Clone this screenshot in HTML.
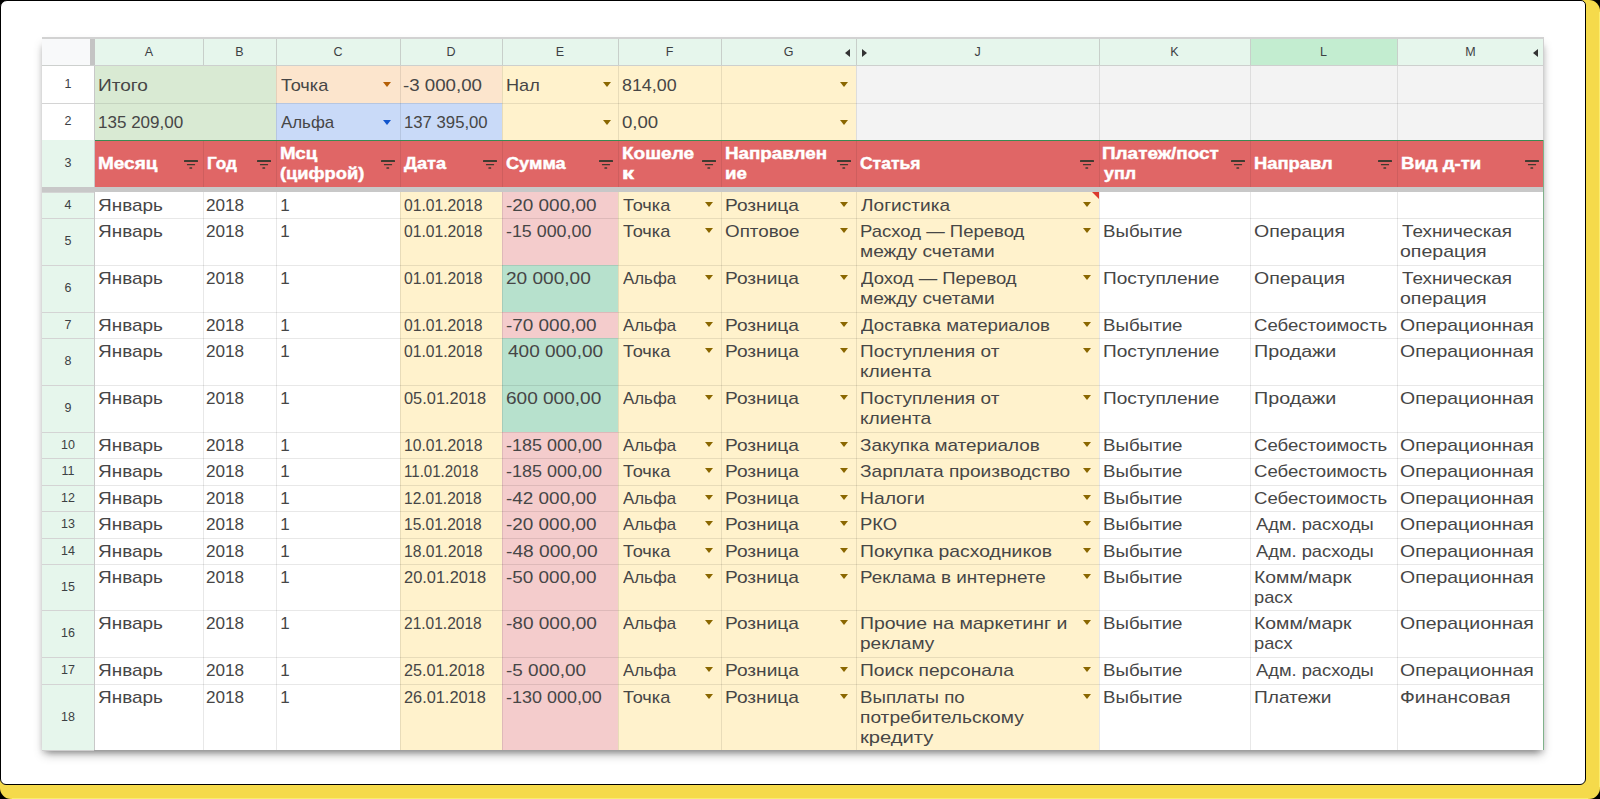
<!DOCTYPE html><html><head><meta charset="utf-8"><title>Sheet</title><style>

*{box-sizing:border-box}
html,body{margin:0;padding:0}
body{width:1600px;height:799px;background:#000;position:relative;overflow:hidden;font-family:"Liberation Sans",sans-serif}
.yl{position:absolute;left:0;top:0;width:1600px;height:799px;background:#f5da4b;border-radius:11px}
.card{position:absolute;left:0;top:0;width:1586px;height:785px;background:#fff;border:1.8px solid #000;border-radius:7px 5px 6px 6px}
.tbl{position:absolute;left:42px;top:37px;width:1502px;height:713px;background:#fff;box-shadow:0 6px 10px -2px rgba(0,0,0,0.30),-3px 6px 5px -3px rgba(0,0,0,0.12),3px 6px 5px -3px rgba(0,0,0,0.12)}
.b{position:absolute}
.t,.h{position:absolute;transform-origin:0 0;white-space:nowrap;font-size:17px;line-height:20px;color:#464646}
.h{color:#fff;font-weight:bold;-webkit-text-stroke:0.45px #fff}
.ch{position:absolute;height:26px;line-height:26px;text-align:center;font-size:12.5px;color:#3c4043}
.rn{position:absolute;text-align:center;font-size:12.5px;color:#3c4043}
.ar{position:absolute;width:0;height:0;border-left:4.5px solid transparent;border-right:4.5px solid transparent;border-top:5px solid #7f6000}
.fi{position:absolute;fill:#3f3a30}
.tl{position:absolute;width:0;height:0;border-top:4.5px solid transparent;border-bottom:4.5px solid transparent;border-right:5.5px solid #333}
.trr{position:absolute;width:0;height:0;border-top:4.5px solid transparent;border-bottom:4.5px solid transparent;border-left:5.5px solid #333}
.cm{position:absolute;width:0;height:0;border-left:7px solid transparent;border-top:7px solid #db3a2d}

</style></head><body>
<div class="yl"></div><div class="b" style="left:12px;top:798px;width:1576px;height:1px;background:#fbec6e"></div><div class="b" style="left:1599px;top:12px;width:1px;height:775px;background:#fbec6e"></div><div class="card"></div><div class="tbl"></div>
<div class="b" style="left:42px;top:39px;width:48px;height:26px;background:#f8f9fa;"></div>
<div class="b" style="left:90px;top:39px;width:5px;height:26px;background:#c4c4c4;"></div>
<div class="b" style="left:95px;top:39px;width:1449px;height:26px;background:#e6f6ec;"></div>
<div class="b" style="left:1250px;top:39px;width:147px;height:26px;background:#c3edd0;"></div>
<div class="b" style="left:42px;top:66px;width:52px;height:74px;background:#ffffff;"></div>
<div class="b" style="left:42px;top:140px;width:52px;height:610px;background:#e6f6ec;"></div>
<div class="b" style="left:95px;top:66px;width:181px;height:74px;background:#d9ead3;"></div>
<div class="b" style="left:276px;top:66px;width:226px;height:37px;background:#fce5cd;"></div>
<div class="b" style="left:276px;top:103px;width:226px;height:37px;background:#c9daf8;"></div>
<div class="b" style="left:502px;top:66px;width:354px;height:74px;background:#fff2cc;"></div>
<div class="b" style="left:856px;top:66px;width:688px;height:74px;background:#f3f3f3;"></div>
<div class="b" style="left:95px;top:140px;width:1449px;height:47px;background:#e06666;"></div>
<div class="b" style="left:42px;top:187px;width:1502px;height:5px;background:#c8c8c8;"></div>
<div class="b" style="left:95px;top:192px;width:1449px;height:558px;background:#ffffff;"></div>
<div class="b" style="left:400px;top:192px;width:102px;height:26px;background:#fff2cc;"></div>
<div class="b" style="left:502px;top:192px;width:116px;height:26px;background:#f4cccc;"></div>
<div class="b" style="left:618px;top:192px;width:481px;height:26px;background:#fff2cc;"></div>
<div class="b" style="left:400px;top:218px;width:102px;height:47px;background:#fff2cc;"></div>
<div class="b" style="left:502px;top:218px;width:116px;height:47px;background:#f4cccc;"></div>
<div class="b" style="left:618px;top:218px;width:481px;height:47px;background:#fff2cc;"></div>
<div class="b" style="left:400px;top:265px;width:102px;height:47px;background:#fff2cc;"></div>
<div class="b" style="left:502px;top:265px;width:116px;height:47px;background:#b7e1cd;"></div>
<div class="b" style="left:618px;top:265px;width:481px;height:47px;background:#fff2cc;"></div>
<div class="b" style="left:400px;top:312px;width:102px;height:26px;background:#fff2cc;"></div>
<div class="b" style="left:502px;top:312px;width:116px;height:26px;background:#f4cccc;"></div>
<div class="b" style="left:618px;top:312px;width:481px;height:26px;background:#fff2cc;"></div>
<div class="b" style="left:400px;top:338px;width:102px;height:47px;background:#fff2cc;"></div>
<div class="b" style="left:502px;top:338px;width:116px;height:47px;background:#b7e1cd;"></div>
<div class="b" style="left:618px;top:338px;width:481px;height:47px;background:#fff2cc;"></div>
<div class="b" style="left:400px;top:385px;width:102px;height:47px;background:#fff2cc;"></div>
<div class="b" style="left:502px;top:385px;width:116px;height:47px;background:#b7e1cd;"></div>
<div class="b" style="left:618px;top:385px;width:481px;height:47px;background:#fff2cc;"></div>
<div class="b" style="left:400px;top:432px;width:102px;height:26px;background:#fff2cc;"></div>
<div class="b" style="left:502px;top:432px;width:116px;height:26px;background:#f4cccc;"></div>
<div class="b" style="left:618px;top:432px;width:481px;height:26px;background:#fff2cc;"></div>
<div class="b" style="left:400px;top:458px;width:102px;height:27px;background:#fff2cc;"></div>
<div class="b" style="left:502px;top:458px;width:116px;height:27px;background:#f4cccc;"></div>
<div class="b" style="left:618px;top:458px;width:481px;height:27px;background:#fff2cc;"></div>
<div class="b" style="left:400px;top:485px;width:102px;height:26px;background:#fff2cc;"></div>
<div class="b" style="left:502px;top:485px;width:116px;height:26px;background:#f4cccc;"></div>
<div class="b" style="left:618px;top:485px;width:481px;height:26px;background:#fff2cc;"></div>
<div class="b" style="left:400px;top:511px;width:102px;height:27px;background:#fff2cc;"></div>
<div class="b" style="left:502px;top:511px;width:116px;height:27px;background:#f4cccc;"></div>
<div class="b" style="left:618px;top:511px;width:481px;height:27px;background:#fff2cc;"></div>
<div class="b" style="left:400px;top:538px;width:102px;height:26px;background:#fff2cc;"></div>
<div class="b" style="left:502px;top:538px;width:116px;height:26px;background:#f4cccc;"></div>
<div class="b" style="left:618px;top:538px;width:481px;height:26px;background:#fff2cc;"></div>
<div class="b" style="left:400px;top:564px;width:102px;height:46px;background:#fff2cc;"></div>
<div class="b" style="left:502px;top:564px;width:116px;height:46px;background:#f4cccc;"></div>
<div class="b" style="left:618px;top:564px;width:481px;height:46px;background:#fff2cc;"></div>
<div class="b" style="left:400px;top:610px;width:102px;height:47px;background:#fff2cc;"></div>
<div class="b" style="left:502px;top:610px;width:116px;height:47px;background:#f4cccc;"></div>
<div class="b" style="left:618px;top:610px;width:481px;height:47px;background:#fff2cc;"></div>
<div class="b" style="left:400px;top:657px;width:102px;height:27px;background:#fff2cc;"></div>
<div class="b" style="left:502px;top:657px;width:116px;height:27px;background:#f4cccc;"></div>
<div class="b" style="left:618px;top:657px;width:481px;height:27px;background:#fff2cc;"></div>
<div class="b" style="left:400px;top:684px;width:102px;height:66px;background:#fff2cc;"></div>
<div class="b" style="left:502px;top:684px;width:116px;height:66px;background:#f4cccc;"></div>
<div class="b" style="left:618px;top:684px;width:481px;height:66px;background:#fff2cc;"></div>
<div class="b" style="left:42px;top:37px;width:1502px;height:2px;background:#d2d2d2"></div>
<div class="b" style="left:42px;top:65px;width:1502px;height:1px;background:#cdd0ce"></div>
<div class="b" style="left:1543px;top:39px;width:1px;height:27px;background:#d0d0d0"></div>
<div class="b" style="left:203px;top:39px;width:1px;height:26px;background:#c8cfca"></div>
<div class="b" style="left:276px;top:39px;width:1px;height:26px;background:#c8cfca"></div>
<div class="b" style="left:400px;top:39px;width:1px;height:26px;background:#c8cfca"></div>
<div class="b" style="left:502px;top:39px;width:1px;height:26px;background:#c8cfca"></div>
<div class="b" style="left:618px;top:39px;width:1px;height:26px;background:#c8cfca"></div>
<div class="b" style="left:721px;top:39px;width:1px;height:26px;background:#c8cfca"></div>
<div class="b" style="left:856px;top:39px;width:1px;height:26px;background:#c8cfca"></div>
<div class="b" style="left:1099px;top:39px;width:1px;height:26px;background:#c8cfca"></div>
<div class="b" style="left:1250px;top:39px;width:1px;height:26px;background:#c8cfca"></div>
<div class="b" style="left:1397px;top:39px;width:1px;height:26px;background:#c8cfca"></div>
<div class="b" style="left:94px;top:66px;width:1px;height:684px;background:#c8c8c8"></div>
<div class="b" style="left:42px;top:103px;width:52px;height:1px;background:#d4d4d4"></div>
<div class="b" style="left:42px;top:192px;width:52px;height:1px;background:#d4d4d4"></div>
<div class="b" style="left:42px;top:218px;width:52px;height:1px;background:#d4d4d4"></div>
<div class="b" style="left:42px;top:265px;width:52px;height:1px;background:#d4d4d4"></div>
<div class="b" style="left:42px;top:312px;width:52px;height:1px;background:#d4d4d4"></div>
<div class="b" style="left:42px;top:338px;width:52px;height:1px;background:#d4d4d4"></div>
<div class="b" style="left:42px;top:385px;width:52px;height:1px;background:#d4d4d4"></div>
<div class="b" style="left:42px;top:432px;width:52px;height:1px;background:#d4d4d4"></div>
<div class="b" style="left:42px;top:458px;width:52px;height:1px;background:#d4d4d4"></div>
<div class="b" style="left:42px;top:485px;width:52px;height:1px;background:#d4d4d4"></div>
<div class="b" style="left:42px;top:511px;width:52px;height:1px;background:#d4d4d4"></div>
<div class="b" style="left:42px;top:538px;width:52px;height:1px;background:#d4d4d4"></div>
<div class="b" style="left:42px;top:564px;width:52px;height:1px;background:#d4d4d4"></div>
<div class="b" style="left:42px;top:610px;width:52px;height:1px;background:#d4d4d4"></div>
<div class="b" style="left:42px;top:657px;width:52px;height:1px;background:#d4d4d4"></div>
<div class="b" style="left:42px;top:684px;width:52px;height:1px;background:#d4d4d4"></div>
<div class="b" style="left:42px;top:750px;width:52px;height:1px;background:#cfcfcf"></div>
<div class="b" style="left:276px;top:66px;width:1px;height:74px;background:rgba(0,0,0,0.09)"></div>
<div class="b" style="left:400px;top:66px;width:1px;height:74px;background:rgba(0,0,0,0.09)"></div>
<div class="b" style="left:502px;top:66px;width:1px;height:74px;background:rgba(0,0,0,0.09)"></div>
<div class="b" style="left:618px;top:66px;width:1px;height:74px;background:rgba(0,0,0,0.09)"></div>
<div class="b" style="left:721px;top:66px;width:1px;height:74px;background:rgba(0,0,0,0.09)"></div>
<div class="b" style="left:856px;top:66px;width:1px;height:74px;background:rgba(0,0,0,0.09)"></div>
<div class="b" style="left:1099px;top:66px;width:1px;height:74px;background:rgba(0,0,0,0.09)"></div>
<div class="b" style="left:1250px;top:66px;width:1px;height:74px;background:rgba(0,0,0,0.09)"></div>
<div class="b" style="left:1397px;top:66px;width:1px;height:74px;background:rgba(0,0,0,0.09)"></div>
<div class="b" style="left:95px;top:103px;width:1449px;height:1px;background:rgba(0,0,0,0.09)"></div>
<div class="b" style="left:1543px;top:66px;width:1px;height:74px;background:#d0d0d0"></div>
<div class="b" style="left:203px;top:141px;width:1px;height:46px;background:rgba(0,0,0,0.08)"></div>
<div class="b" style="left:276px;top:141px;width:1px;height:46px;background:rgba(0,0,0,0.08)"></div>
<div class="b" style="left:400px;top:141px;width:1px;height:46px;background:rgba(0,0,0,0.08)"></div>
<div class="b" style="left:502px;top:141px;width:1px;height:46px;background:rgba(0,0,0,0.08)"></div>
<div class="b" style="left:618px;top:141px;width:1px;height:46px;background:rgba(0,0,0,0.08)"></div>
<div class="b" style="left:721px;top:141px;width:1px;height:46px;background:rgba(0,0,0,0.08)"></div>
<div class="b" style="left:856px;top:141px;width:1px;height:46px;background:rgba(0,0,0,0.08)"></div>
<div class="b" style="left:1099px;top:141px;width:1px;height:46px;background:rgba(0,0,0,0.08)"></div>
<div class="b" style="left:1250px;top:141px;width:1px;height:46px;background:rgba(0,0,0,0.08)"></div>
<div class="b" style="left:1397px;top:141px;width:1px;height:46px;background:rgba(0,0,0,0.08)"></div>
<div class="b" style="left:95px;top:140px;width:1449px;height:1px;background:#3a8a52"></div>
<div class="b" style="left:95px;top:218px;width:1449px;height:1px;background:rgba(0,0,0,0.09)"></div>
<div class="b" style="left:95px;top:265px;width:1449px;height:1px;background:rgba(0,0,0,0.09)"></div>
<div class="b" style="left:95px;top:312px;width:1449px;height:1px;background:rgba(0,0,0,0.09)"></div>
<div class="b" style="left:95px;top:338px;width:1449px;height:1px;background:rgba(0,0,0,0.09)"></div>
<div class="b" style="left:95px;top:385px;width:1449px;height:1px;background:rgba(0,0,0,0.09)"></div>
<div class="b" style="left:95px;top:432px;width:1449px;height:1px;background:rgba(0,0,0,0.09)"></div>
<div class="b" style="left:95px;top:458px;width:1449px;height:1px;background:rgba(0,0,0,0.09)"></div>
<div class="b" style="left:95px;top:485px;width:1449px;height:1px;background:rgba(0,0,0,0.09)"></div>
<div class="b" style="left:95px;top:511px;width:1449px;height:1px;background:rgba(0,0,0,0.09)"></div>
<div class="b" style="left:95px;top:538px;width:1449px;height:1px;background:rgba(0,0,0,0.09)"></div>
<div class="b" style="left:95px;top:564px;width:1449px;height:1px;background:rgba(0,0,0,0.09)"></div>
<div class="b" style="left:95px;top:610px;width:1449px;height:1px;background:rgba(0,0,0,0.09)"></div>
<div class="b" style="left:95px;top:657px;width:1449px;height:1px;background:rgba(0,0,0,0.09)"></div>
<div class="b" style="left:95px;top:684px;width:1449px;height:1px;background:rgba(0,0,0,0.09)"></div>
<div class="b" style="left:203px;top:192px;width:1px;height:558px;background:rgba(0,0,0,0.09)"></div>
<div class="b" style="left:276px;top:192px;width:1px;height:558px;background:rgba(0,0,0,0.09)"></div>
<div class="b" style="left:400px;top:192px;width:1px;height:558px;background:rgba(0,0,0,0.09)"></div>
<div class="b" style="left:502px;top:192px;width:1px;height:558px;background:rgba(0,0,0,0.09)"></div>
<div class="b" style="left:618px;top:192px;width:1px;height:558px;background:rgba(0,0,0,0.09)"></div>
<div class="b" style="left:721px;top:192px;width:1px;height:558px;background:rgba(0,0,0,0.09)"></div>
<div class="b" style="left:856px;top:192px;width:1px;height:558px;background:rgba(0,0,0,0.09)"></div>
<div class="b" style="left:1099px;top:192px;width:1px;height:558px;background:rgba(0,0,0,0.09)"></div>
<div class="b" style="left:1250px;top:192px;width:1px;height:558px;background:rgba(0,0,0,0.09)"></div>
<div class="b" style="left:1397px;top:192px;width:1px;height:558px;background:rgba(0,0,0,0.09)"></div>
<div class="b" style="left:1543px;top:140px;width:1px;height:610px;background:#7fb28a"></div>
<div class="ch" style="left:95px;top:39px;width:108px">A</div>
<div class="ch" style="left:203px;top:39px;width:73px">B</div>
<div class="ch" style="left:276px;top:39px;width:124px">C</div>
<div class="ch" style="left:400px;top:39px;width:102px">D</div>
<div class="ch" style="left:502px;top:39px;width:116px">E</div>
<div class="ch" style="left:618px;top:39px;width:103px">F</div>
<div class="ch" style="left:721px;top:39px;width:135px">G</div>
<div class="ch" style="left:856px;top:39px;width:243px">J</div>
<div class="ch" style="left:1099px;top:39px;width:151px">K</div>
<div class="ch" style="left:1250px;top:39px;width:147px">L</div>
<div class="ch" style="left:1397px;top:39px;width:147px">M</div>
<div class="tl" style="left:845px;top:48.5px"></div>
<div class="trr" style="left:862px;top:48.5px"></div>
<div class="tl" style="left:1533px;top:48.5px"></div>
<div class="rn" style="left:42px;top:66px;width:52px;height:37px;line-height:37px">1</div>
<div class="rn" style="left:42px;top:103px;width:52px;height:37px;line-height:37px">2</div>
<div class="rn" style="left:42px;top:140px;width:52px;height:47px;line-height:47px">3</div>
<div class="rn" style="left:42px;top:192px;width:52px;height:26px;line-height:26px">4</div>
<div class="rn" style="left:42px;top:218px;width:52px;height:47px;line-height:47px">5</div>
<div class="rn" style="left:42px;top:265px;width:52px;height:47px;line-height:47px">6</div>
<div class="rn" style="left:42px;top:312px;width:52px;height:26px;line-height:26px">7</div>
<div class="rn" style="left:42px;top:338px;width:52px;height:47px;line-height:47px">8</div>
<div class="rn" style="left:42px;top:385px;width:52px;height:47px;line-height:47px">9</div>
<div class="rn" style="left:42px;top:432px;width:52px;height:26px;line-height:26px">10</div>
<div class="rn" style="left:42px;top:458px;width:52px;height:27px;line-height:27px">11</div>
<div class="rn" style="left:42px;top:485px;width:52px;height:26px;line-height:26px">12</div>
<div class="rn" style="left:42px;top:511px;width:52px;height:27px;line-height:27px">13</div>
<div class="rn" style="left:42px;top:538px;width:52px;height:26px;line-height:26px">14</div>
<div class="rn" style="left:42px;top:564px;width:52px;height:46px;line-height:46px">15</div>
<div class="rn" style="left:42px;top:610px;width:52px;height:47px;line-height:47px">16</div>
<div class="rn" style="left:42px;top:657px;width:52px;height:27px;line-height:27px">17</div>
<div class="rn" style="left:42px;top:684px;width:52px;height:66px;line-height:66px">18</div>
<div class="ar" style="left:383px;top:82px;border-top-color:#b45f06"></div>
<div class="ar" style="left:383px;top:120px;border-top-color:#1155cc"></div>
<div class="ar" style="left:602.5px;top:82px;border-top-color:#8a6700"></div>
<div class="ar" style="left:602.5px;top:120px;border-top-color:#8a6700"></div>
<div class="ar" style="left:840px;top:82px;border-top-color:#8a6700"></div>
<div class="ar" style="left:840px;top:120px;border-top-color:#8a6700"></div>
<svg class="fi" style="left:184px;top:160px" width="14" height="9" viewBox="0 0 14 9"><rect x="0" y="0.1" width="14" height="1.8" rx="0.5"/><rect x="2.9" y="3.9" width="8.2" height="1.4" rx="0.5"/><rect x="5.4" y="7.2" width="2.8" height="1.5" rx="0.5"/></svg>
<svg class="fi" style="left:257px;top:160px" width="14" height="9" viewBox="0 0 14 9"><rect x="0" y="0.1" width="14" height="1.8" rx="0.5"/><rect x="2.9" y="3.9" width="8.2" height="1.4" rx="0.5"/><rect x="5.4" y="7.2" width="2.8" height="1.5" rx="0.5"/></svg>
<svg class="fi" style="left:381px;top:160px" width="14" height="9" viewBox="0 0 14 9"><rect x="0" y="0.1" width="14" height="1.8" rx="0.5"/><rect x="2.9" y="3.9" width="8.2" height="1.4" rx="0.5"/><rect x="5.4" y="7.2" width="2.8" height="1.5" rx="0.5"/></svg>
<svg class="fi" style="left:483px;top:160px" width="14" height="9" viewBox="0 0 14 9"><rect x="0" y="0.1" width="14" height="1.8" rx="0.5"/><rect x="2.9" y="3.9" width="8.2" height="1.4" rx="0.5"/><rect x="5.4" y="7.2" width="2.8" height="1.5" rx="0.5"/></svg>
<svg class="fi" style="left:599px;top:160px" width="14" height="9" viewBox="0 0 14 9"><rect x="0" y="0.1" width="14" height="1.8" rx="0.5"/><rect x="2.9" y="3.9" width="8.2" height="1.4" rx="0.5"/><rect x="5.4" y="7.2" width="2.8" height="1.5" rx="0.5"/></svg>
<svg class="fi" style="left:702px;top:160px" width="14" height="9" viewBox="0 0 14 9"><rect x="0" y="0.1" width="14" height="1.8" rx="0.5"/><rect x="2.9" y="3.9" width="8.2" height="1.4" rx="0.5"/><rect x="5.4" y="7.2" width="2.8" height="1.5" rx="0.5"/></svg>
<svg class="fi" style="left:837px;top:160px" width="14" height="9" viewBox="0 0 14 9"><rect x="0" y="0.1" width="14" height="1.8" rx="0.5"/><rect x="2.9" y="3.9" width="8.2" height="1.4" rx="0.5"/><rect x="5.4" y="7.2" width="2.8" height="1.5" rx="0.5"/></svg>
<svg class="fi" style="left:1080px;top:160px" width="14" height="9" viewBox="0 0 14 9"><rect x="0" y="0.1" width="14" height="1.8" rx="0.5"/><rect x="2.9" y="3.9" width="8.2" height="1.4" rx="0.5"/><rect x="5.4" y="7.2" width="2.8" height="1.5" rx="0.5"/></svg>
<svg class="fi" style="left:1231px;top:160px" width="14" height="9" viewBox="0 0 14 9"><rect x="0" y="0.1" width="14" height="1.8" rx="0.5"/><rect x="2.9" y="3.9" width="8.2" height="1.4" rx="0.5"/><rect x="5.4" y="7.2" width="2.8" height="1.5" rx="0.5"/></svg>
<svg class="fi" style="left:1378px;top:160px" width="14" height="9" viewBox="0 0 14 9"><rect x="0" y="0.1" width="14" height="1.8" rx="0.5"/><rect x="2.9" y="3.9" width="8.2" height="1.4" rx="0.5"/><rect x="5.4" y="7.2" width="2.8" height="1.5" rx="0.5"/></svg>
<svg class="fi" style="left:1525px;top:160px" width="14" height="9" viewBox="0 0 14 9"><rect x="0" y="0.1" width="14" height="1.8" rx="0.5"/><rect x="2.9" y="3.9" width="8.2" height="1.4" rx="0.5"/><rect x="5.4" y="7.2" width="2.8" height="1.5" rx="0.5"/></svg>
<div class="ar" style="left:705px;top:202px;border-top-color:#8a6700"></div>
<div class="ar" style="left:840px;top:202px;border-top-color:#8a6700"></div>
<div class="ar" style="left:1083px;top:202px;border-top-color:#8a6700"></div>
<div class="ar" style="left:705px;top:228px;border-top-color:#8a6700"></div>
<div class="ar" style="left:840px;top:228px;border-top-color:#8a6700"></div>
<div class="ar" style="left:1083px;top:228px;border-top-color:#8a6700"></div>
<div class="ar" style="left:705px;top:275px;border-top-color:#8a6700"></div>
<div class="ar" style="left:840px;top:275px;border-top-color:#8a6700"></div>
<div class="ar" style="left:1083px;top:275px;border-top-color:#8a6700"></div>
<div class="ar" style="left:705px;top:322px;border-top-color:#8a6700"></div>
<div class="ar" style="left:840px;top:322px;border-top-color:#8a6700"></div>
<div class="ar" style="left:1083px;top:322px;border-top-color:#8a6700"></div>
<div class="ar" style="left:705px;top:348px;border-top-color:#8a6700"></div>
<div class="ar" style="left:840px;top:348px;border-top-color:#8a6700"></div>
<div class="ar" style="left:1083px;top:348px;border-top-color:#8a6700"></div>
<div class="ar" style="left:705px;top:395px;border-top-color:#8a6700"></div>
<div class="ar" style="left:840px;top:395px;border-top-color:#8a6700"></div>
<div class="ar" style="left:1083px;top:395px;border-top-color:#8a6700"></div>
<div class="ar" style="left:705px;top:442px;border-top-color:#8a6700"></div>
<div class="ar" style="left:840px;top:442px;border-top-color:#8a6700"></div>
<div class="ar" style="left:1083px;top:442px;border-top-color:#8a6700"></div>
<div class="ar" style="left:705px;top:468px;border-top-color:#8a6700"></div>
<div class="ar" style="left:840px;top:468px;border-top-color:#8a6700"></div>
<div class="ar" style="left:1083px;top:468px;border-top-color:#8a6700"></div>
<div class="ar" style="left:705px;top:495px;border-top-color:#8a6700"></div>
<div class="ar" style="left:840px;top:495px;border-top-color:#8a6700"></div>
<div class="ar" style="left:1083px;top:495px;border-top-color:#8a6700"></div>
<div class="ar" style="left:705px;top:521px;border-top-color:#8a6700"></div>
<div class="ar" style="left:840px;top:521px;border-top-color:#8a6700"></div>
<div class="ar" style="left:1083px;top:521px;border-top-color:#8a6700"></div>
<div class="ar" style="left:705px;top:548px;border-top-color:#8a6700"></div>
<div class="ar" style="left:840px;top:548px;border-top-color:#8a6700"></div>
<div class="ar" style="left:1083px;top:548px;border-top-color:#8a6700"></div>
<div class="ar" style="left:705px;top:574px;border-top-color:#8a6700"></div>
<div class="ar" style="left:840px;top:574px;border-top-color:#8a6700"></div>
<div class="ar" style="left:1083px;top:574px;border-top-color:#8a6700"></div>
<div class="ar" style="left:705px;top:620px;border-top-color:#8a6700"></div>
<div class="ar" style="left:840px;top:620px;border-top-color:#8a6700"></div>
<div class="ar" style="left:1083px;top:620px;border-top-color:#8a6700"></div>
<div class="ar" style="left:705px;top:667px;border-top-color:#8a6700"></div>
<div class="ar" style="left:840px;top:667px;border-top-color:#8a6700"></div>
<div class="ar" style="left:1083px;top:667px;border-top-color:#8a6700"></div>
<div class="ar" style="left:705px;top:694px;border-top-color:#8a6700"></div>
<div class="ar" style="left:840px;top:694px;border-top-color:#8a6700"></div>
<div class="ar" style="left:1083px;top:694px;border-top-color:#8a6700"></div>
<div class="cm" style="left:1092px;top:192px"></div>
<div class="t" style="left:98.18px;top:75.50px;transform:scaleX(1.1209)">Итого</div>
<div class="t" style="left:98.30px;top:112.50px;transform:scaleX(1.0012)">135 209,00</div>
<div class="t" style="left:281.20px;top:75.50px;transform:scaleX(1.0682)">Точка</div>
<div class="t" style="left:281.20px;top:112.50px;transform:scaleX(0.9926)">Альфа</div>
<div class="t" style="left:403.40px;top:75.50px;transform:scaleX(1.1000)">-3 000,00</div>
<div class="t" style="left:403.52px;top:112.50px;transform:scaleX(0.9833)">137 395,00</div>
<div class="t" style="left:506.43px;top:75.50px;transform:scaleX(1.0667)">Нал</div>
<div class="t" style="left:622.15px;top:75.50px;transform:scaleX(1.0500)">814,00</div>
<div class="t" style="left:622.11px;top:112.50px;transform:scaleX(1.0938)">0,00</div>
<div class="h" style="left:97.88px;top:154.00px;transform:scaleX(1.1154)">Месяц</div>
<div class="h" style="left:206.59px;top:154.00px;transform:scaleX(1.0069)">Год</div>
<div class="h" style="left:280.10px;top:144.00px;transform:scaleX(1.1030)">Мсц</div>
<div class="h" style="left:280.12px;top:164.00px;transform:scaleX(1.0753)">(цифрой)</div>
<div class="h" style="left:404.00px;top:154.00px;transform:scaleX(1.0700)">Дата</div>
<div class="h" style="left:505.63px;top:154.00px;transform:scaleX(1.0673)">Сумма</div>
<div class="h" style="left:621.88px;top:144.00px;transform:scaleX(1.1190)">Кошеле</div>
<div class="h" style="left:621.59px;top:164.00px;transform:scaleX(1.4143)">к</div>
<div class="h" style="left:725.20px;top:144.00px;transform:scaleX(1.1044)">Направлен</div>
<div class="h" style="left:725.20px;top:164.00px;transform:scaleX(1.1000)">ие</div>
<div class="h" style="left:859.77px;top:154.00px;transform:scaleX(1.0281)">Статья</div>
<div class="h" style="left:1102.49px;top:144.00px;transform:scaleX(1.1125)">Платеж/пост</div>
<div class="h" style="left:1103.60px;top:164.00px;transform:scaleX(1.0500)">упл</div>
<div class="h" style="left:1254.42px;top:154.00px;transform:scaleX(1.0803)">Направл</div>
<div class="h" style="left:1400.81px;top:154.00px;transform:scaleX(1.0915)">Вид д-ти</div>
<div class="t" style="left:98.19px;top:196.00px;transform:scaleX(1.1140)">Январь</div>
<div class="t" style="left:205.99px;top:196.00px;transform:scaleX(1.0083)">2018</div>
<div class="t" style="left:280.20px;top:196.00px;transform:scaleX(1.0000)">1</div>
<div class="t" style="left:403.58px;top:196.00px;transform:scaleX(0.9226)">01.01.2018</div>
<div class="t" style="left:506.39px;top:196.00px;transform:scaleX(1.1125)">-20 000,00</div>
<div class="t" style="left:623.20px;top:196.00px;transform:scaleX(1.0682)">Точка</div>
<div class="t" style="left:725.08px;top:196.00px;transform:scaleX(1.1246)">Розница</div>
<div class="t" style="left:860.80px;top:196.00px;transform:scaleX(1.1225)">Логистика</div>
<div class="t" style="left:98.19px;top:222.00px;transform:scaleX(1.1140)">Январь</div>
<div class="t" style="left:205.99px;top:222.00px;transform:scaleX(1.0083)">2018</div>
<div class="t" style="left:280.20px;top:222.00px;transform:scaleX(1.0000)">1</div>
<div class="t" style="left:403.58px;top:222.00px;transform:scaleX(0.9226)">01.01.2018</div>
<div class="t" style="left:506.45px;top:222.00px;transform:scaleX(1.0500)">-15 000,00</div>
<div class="t" style="left:623.20px;top:222.00px;transform:scaleX(1.0682)">Точка</div>
<div class="t" style="left:725.09px;top:222.00px;transform:scaleX(1.1076)">Оптовое</div>
<div class="t" style="left:859.71px;top:222.00px;transform:scaleX(1.0893)">Расход — Перевод</div>
<div class="t" style="left:859.68px;top:242.00px;transform:scaleX(1.1246)">между счетами</div>
<div class="t" style="left:1102.90px;top:222.00px;transform:scaleX(1.1000)">Выбытие</div>
<div class="t" style="left:1254.35px;top:222.00px;transform:scaleX(1.1481)">Операция</div>
<div class="t" style="left:1401.50px;top:222.00px;transform:scaleX(1.1092)">Техническая</div>
<div class="t" style="left:1400.35px;top:242.00px;transform:scaleX(1.1486)">операция</div>
<div class="t" style="left:98.19px;top:269.00px;transform:scaleX(1.1140)">Январь</div>
<div class="t" style="left:205.99px;top:269.00px;transform:scaleX(1.0083)">2018</div>
<div class="t" style="left:280.20px;top:269.00px;transform:scaleX(1.0000)">1</div>
<div class="t" style="left:403.58px;top:269.00px;transform:scaleX(0.9226)">01.01.2018</div>
<div class="t" style="left:506.38px;top:269.00px;transform:scaleX(1.1216)">20 000,00</div>
<div class="t" style="left:623.20px;top:269.00px;transform:scaleX(0.9926)">Альфа</div>
<div class="t" style="left:725.08px;top:269.00px;transform:scaleX(1.1246)">Розница</div>
<div class="t" style="left:860.80px;top:269.00px;transform:scaleX(1.0874)">Доход — Перевод</div>
<div class="t" style="left:859.68px;top:289.00px;transform:scaleX(1.1246)">между счетами</div>
<div class="t" style="left:1102.88px;top:269.00px;transform:scaleX(1.1235)">Поступление</div>
<div class="t" style="left:1254.35px;top:269.00px;transform:scaleX(1.1481)">Операция</div>
<div class="t" style="left:1401.50px;top:269.00px;transform:scaleX(1.1092)">Техническая</div>
<div class="t" style="left:1400.35px;top:289.00px;transform:scaleX(1.1486)">операция</div>
<div class="t" style="left:98.19px;top:316.00px;transform:scaleX(1.1140)">Январь</div>
<div class="t" style="left:205.99px;top:316.00px;transform:scaleX(1.0083)">2018</div>
<div class="t" style="left:280.20px;top:316.00px;transform:scaleX(1.0000)">1</div>
<div class="t" style="left:403.58px;top:316.00px;transform:scaleX(0.9226)">01.01.2018</div>
<div class="t" style="left:506.39px;top:316.00px;transform:scaleX(1.1125)">-70 000,00</div>
<div class="t" style="left:623.20px;top:316.00px;transform:scaleX(0.9926)">Альфа</div>
<div class="t" style="left:725.08px;top:316.00px;transform:scaleX(1.1246)">Розница</div>
<div class="t" style="left:860.80px;top:316.00px;transform:scaleX(1.0953)">Доставка материалов</div>
<div class="t" style="left:1102.90px;top:316.00px;transform:scaleX(1.1000)">Выбытие</div>
<div class="t" style="left:1254.41px;top:316.00px;transform:scaleX(1.0917)">Себестоимость</div>
<div class="t" style="left:1400.36px;top:316.00px;transform:scaleX(1.1443)">Операционная</div>
<div class="t" style="left:98.19px;top:342.00px;transform:scaleX(1.1140)">Январь</div>
<div class="t" style="left:205.99px;top:342.00px;transform:scaleX(1.0083)">2018</div>
<div class="t" style="left:280.20px;top:342.00px;transform:scaleX(1.0000)">1</div>
<div class="t" style="left:403.58px;top:342.00px;transform:scaleX(0.9226)">01.01.2018</div>
<div class="t" style="left:507.50px;top:342.00px;transform:scaleX(1.1176)">400 000,00</div>
<div class="t" style="left:623.20px;top:342.00px;transform:scaleX(1.0682)">Точка</div>
<div class="t" style="left:725.08px;top:342.00px;transform:scaleX(1.1246)">Розница</div>
<div class="t" style="left:859.68px;top:342.00px;transform:scaleX(1.1153)">Поступления от</div>
<div class="t" style="left:859.67px;top:362.00px;transform:scaleX(1.1306)">клиента</div>
<div class="t" style="left:1102.88px;top:342.00px;transform:scaleX(1.1235)">Поступление</div>
<div class="t" style="left:1254.34px;top:342.00px;transform:scaleX(1.1594)">Продажи</div>
<div class="t" style="left:1400.36px;top:342.00px;transform:scaleX(1.1443)">Операционная</div>
<div class="t" style="left:98.19px;top:389.00px;transform:scaleX(1.1140)">Январь</div>
<div class="t" style="left:205.99px;top:389.00px;transform:scaleX(1.0083)">2018</div>
<div class="t" style="left:280.20px;top:389.00px;transform:scaleX(1.0000)">1</div>
<div class="t" style="left:403.54px;top:389.00px;transform:scaleX(0.9643)">05.01.2018</div>
<div class="t" style="left:506.38px;top:389.00px;transform:scaleX(1.1190)">600 000,00</div>
<div class="t" style="left:623.20px;top:389.00px;transform:scaleX(0.9926)">Альфа</div>
<div class="t" style="left:725.08px;top:389.00px;transform:scaleX(1.1246)">Розница</div>
<div class="t" style="left:859.68px;top:389.00px;transform:scaleX(1.1153)">Поступления от</div>
<div class="t" style="left:859.67px;top:409.00px;transform:scaleX(1.1306)">клиента</div>
<div class="t" style="left:1102.88px;top:389.00px;transform:scaleX(1.1235)">Поступление</div>
<div class="t" style="left:1254.34px;top:389.00px;transform:scaleX(1.1594)">Продажи</div>
<div class="t" style="left:1400.36px;top:389.00px;transform:scaleX(1.1443)">Операционная</div>
<div class="t" style="left:98.19px;top:436.00px;transform:scaleX(1.1140)">Январь</div>
<div class="t" style="left:205.99px;top:436.00px;transform:scaleX(1.0083)">2018</div>
<div class="t" style="left:280.20px;top:436.00px;transform:scaleX(1.0000)">1</div>
<div class="t" style="left:403.58px;top:436.00px;transform:scaleX(0.9226)">10.01.2018</div>
<div class="t" style="left:506.44px;top:436.00px;transform:scaleX(1.0573)">-185 000,00</div>
<div class="t" style="left:623.20px;top:436.00px;transform:scaleX(0.9926)">Альфа</div>
<div class="t" style="left:725.08px;top:436.00px;transform:scaleX(1.1246)">Розница</div>
<div class="t" style="left:859.69px;top:436.00px;transform:scaleX(1.1113)">Закупка материалов</div>
<div class="t" style="left:1102.90px;top:436.00px;transform:scaleX(1.1000)">Выбытие</div>
<div class="t" style="left:1254.41px;top:436.00px;transform:scaleX(1.0917)">Себестоимость</div>
<div class="t" style="left:1400.36px;top:436.00px;transform:scaleX(1.1443)">Операционная</div>
<div class="t" style="left:98.19px;top:462.00px;transform:scaleX(1.1140)">Январь</div>
<div class="t" style="left:205.99px;top:462.00px;transform:scaleX(1.0083)">2018</div>
<div class="t" style="left:280.20px;top:462.00px;transform:scaleX(1.0000)">1</div>
<div class="t" style="left:403.61px;top:462.00px;transform:scaleX(0.8866)">11.01.2018</div>
<div class="t" style="left:506.44px;top:462.00px;transform:scaleX(1.0573)">-185 000,00</div>
<div class="t" style="left:623.20px;top:462.00px;transform:scaleX(1.0682)">Точка</div>
<div class="t" style="left:725.08px;top:462.00px;transform:scaleX(1.1246)">Розница</div>
<div class="t" style="left:859.68px;top:462.00px;transform:scaleX(1.1243)">Зарплата производство</div>
<div class="t" style="left:1102.90px;top:462.00px;transform:scaleX(1.1000)">Выбытие</div>
<div class="t" style="left:1254.41px;top:462.00px;transform:scaleX(1.0917)">Себестоимость</div>
<div class="t" style="left:1400.36px;top:462.00px;transform:scaleX(1.1443)">Операционная</div>
<div class="t" style="left:98.19px;top:489.00px;transform:scaleX(1.1140)">Январь</div>
<div class="t" style="left:205.99px;top:489.00px;transform:scaleX(1.0083)">2018</div>
<div class="t" style="left:280.20px;top:489.00px;transform:scaleX(1.0000)">1</div>
<div class="t" style="left:403.59px;top:489.00px;transform:scaleX(0.9131)">12.01.2018</div>
<div class="t" style="left:506.39px;top:489.00px;transform:scaleX(1.1125)">-42 000,00</div>
<div class="t" style="left:623.20px;top:489.00px;transform:scaleX(0.9926)">Альфа</div>
<div class="t" style="left:725.08px;top:489.00px;transform:scaleX(1.1246)">Розница</div>
<div class="t" style="left:859.67px;top:489.00px;transform:scaleX(1.1345)">Налоги</div>
<div class="t" style="left:1102.90px;top:489.00px;transform:scaleX(1.1000)">Выбытие</div>
<div class="t" style="left:1254.41px;top:489.00px;transform:scaleX(1.0917)">Себестоимость</div>
<div class="t" style="left:1400.36px;top:489.00px;transform:scaleX(1.1443)">Операционная</div>
<div class="t" style="left:98.19px;top:515.00px;transform:scaleX(1.1140)">Январь</div>
<div class="t" style="left:205.99px;top:515.00px;transform:scaleX(1.0083)">2018</div>
<div class="t" style="left:280.20px;top:515.00px;transform:scaleX(1.0000)">1</div>
<div class="t" style="left:403.59px;top:515.00px;transform:scaleX(0.9131)">15.01.2018</div>
<div class="t" style="left:506.39px;top:515.00px;transform:scaleX(1.1125)">-20 000,00</div>
<div class="t" style="left:623.20px;top:515.00px;transform:scaleX(0.9926)">Альфа</div>
<div class="t" style="left:725.08px;top:515.00px;transform:scaleX(1.1246)">Розница</div>
<div class="t" style="left:859.72px;top:515.00px;transform:scaleX(1.0848)">РКО</div>
<div class="t" style="left:1102.90px;top:515.00px;transform:scaleX(1.1000)">Выбытие</div>
<div class="t" style="left:1255.50px;top:515.00px;transform:scaleX(1.0769)">Адм. расходы</div>
<div class="t" style="left:1400.36px;top:515.00px;transform:scaleX(1.1443)">Операционная</div>
<div class="t" style="left:98.19px;top:542.00px;transform:scaleX(1.1140)">Январь</div>
<div class="t" style="left:205.99px;top:542.00px;transform:scaleX(1.0083)">2018</div>
<div class="t" style="left:280.20px;top:542.00px;transform:scaleX(1.0000)">1</div>
<div class="t" style="left:403.58px;top:542.00px;transform:scaleX(0.9238)">18.01.2018</div>
<div class="t" style="left:506.37px;top:542.00px;transform:scaleX(1.1275)">-48 000,00</div>
<div class="t" style="left:623.20px;top:542.00px;transform:scaleX(1.0682)">Точка</div>
<div class="t" style="left:725.08px;top:542.00px;transform:scaleX(1.1246)">Розница</div>
<div class="t" style="left:859.66px;top:542.00px;transform:scaleX(1.1389)">Покупка расходников</div>
<div class="t" style="left:1102.90px;top:542.00px;transform:scaleX(1.1000)">Выбытие</div>
<div class="t" style="left:1255.50px;top:542.00px;transform:scaleX(1.0769)">Адм. расходы</div>
<div class="t" style="left:1400.36px;top:542.00px;transform:scaleX(1.1443)">Операционная</div>
<div class="t" style="left:98.19px;top:568.00px;transform:scaleX(1.1140)">Январь</div>
<div class="t" style="left:205.99px;top:568.00px;transform:scaleX(1.0083)">2018</div>
<div class="t" style="left:280.20px;top:568.00px;transform:scaleX(1.0000)">1</div>
<div class="t" style="left:403.53px;top:568.00px;transform:scaleX(0.9667)">20.01.2018</div>
<div class="t" style="left:506.39px;top:568.00px;transform:scaleX(1.1125)">-50 000,00</div>
<div class="t" style="left:623.20px;top:568.00px;transform:scaleX(0.9926)">Альфа</div>
<div class="t" style="left:725.08px;top:568.00px;transform:scaleX(1.1246)">Розница</div>
<div class="t" style="left:859.69px;top:568.00px;transform:scaleX(1.1096)">Реклама в интернете</div>
<div class="t" style="left:1102.90px;top:568.00px;transform:scaleX(1.1000)">Выбытие</div>
<div class="t" style="left:1254.36px;top:568.00px;transform:scaleX(1.1405)">Комм/марк</div>
<div class="t" style="left:1254.43px;top:588.00px;transform:scaleX(1.0743)">расх</div>
<div class="t" style="left:1400.36px;top:568.00px;transform:scaleX(1.1443)">Операционная</div>
<div class="t" style="left:98.19px;top:614.00px;transform:scaleX(1.1140)">Январь</div>
<div class="t" style="left:205.99px;top:614.00px;transform:scaleX(1.0083)">2018</div>
<div class="t" style="left:280.20px;top:614.00px;transform:scaleX(1.0000)">1</div>
<div class="t" style="left:403.59px;top:614.00px;transform:scaleX(0.9131)">21.01.2018</div>
<div class="t" style="left:506.38px;top:614.00px;transform:scaleX(1.1187)">-80 000,00</div>
<div class="t" style="left:623.20px;top:614.00px;transform:scaleX(0.9926)">Альфа</div>
<div class="t" style="left:725.08px;top:614.00px;transform:scaleX(1.1246)">Розница</div>
<div class="t" style="left:859.66px;top:614.00px;transform:scaleX(1.1447)">Прочие на маркетинг и</div>
<div class="t" style="left:859.68px;top:634.00px;transform:scaleX(1.1200)">рекламу</div>
<div class="t" style="left:1102.90px;top:614.00px;transform:scaleX(1.1000)">Выбытие</div>
<div class="t" style="left:1254.36px;top:614.00px;transform:scaleX(1.1405)">Комм/марк</div>
<div class="t" style="left:1254.43px;top:634.00px;transform:scaleX(1.0743)">расх</div>
<div class="t" style="left:1400.36px;top:614.00px;transform:scaleX(1.1443)">Операционная</div>
<div class="t" style="left:98.19px;top:661.00px;transform:scaleX(1.1140)">Январь</div>
<div class="t" style="left:205.99px;top:661.00px;transform:scaleX(1.0083)">2018</div>
<div class="t" style="left:280.20px;top:661.00px;transform:scaleX(1.0000)">1</div>
<div class="t" style="left:403.55px;top:661.00px;transform:scaleX(0.9488)">25.01.2018</div>
<div class="t" style="left:506.39px;top:661.00px;transform:scaleX(1.1143)">-5 000,00</div>
<div class="t" style="left:623.20px;top:661.00px;transform:scaleX(0.9926)">Альфа</div>
<div class="t" style="left:725.08px;top:661.00px;transform:scaleX(1.1246)">Розница</div>
<div class="t" style="left:859.67px;top:661.00px;transform:scaleX(1.1289)">Поиск персонала</div>
<div class="t" style="left:1102.90px;top:661.00px;transform:scaleX(1.1000)">Выбытие</div>
<div class="t" style="left:1255.50px;top:661.00px;transform:scaleX(1.0769)">Адм. расходы</div>
<div class="t" style="left:1400.36px;top:661.00px;transform:scaleX(1.1443)">Операционная</div>
<div class="t" style="left:98.19px;top:688.00px;transform:scaleX(1.1140)">Январь</div>
<div class="t" style="left:205.99px;top:688.00px;transform:scaleX(1.0083)">2018</div>
<div class="t" style="left:280.20px;top:688.00px;transform:scaleX(1.0000)">1</div>
<div class="t" style="left:403.54px;top:688.00px;transform:scaleX(0.9607)">26.01.2018</div>
<div class="t" style="left:506.44px;top:688.00px;transform:scaleX(1.0562)">-130 000,00</div>
<div class="t" style="left:623.20px;top:688.00px;transform:scaleX(1.0682)">Точка</div>
<div class="t" style="left:725.08px;top:688.00px;transform:scaleX(1.1246)">Розница</div>
<div class="t" style="left:859.70px;top:688.00px;transform:scaleX(1.1000)">Выплаты по</div>
<div class="t" style="left:859.67px;top:708.00px;transform:scaleX(1.1271)">потребительскому</div>
<div class="t" style="left:859.61px;top:728.00px;transform:scaleX(1.1869)">кредиту</div>
<div class="t" style="left:1102.90px;top:688.00px;transform:scaleX(1.1000)">Выбытие</div>
<div class="t" style="left:1254.38px;top:688.00px;transform:scaleX(1.1239)">Платежи</div>
<div class="t" style="left:1400.35px;top:688.00px;transform:scaleX(1.1479)">Финансовая</div>
</body></html>
